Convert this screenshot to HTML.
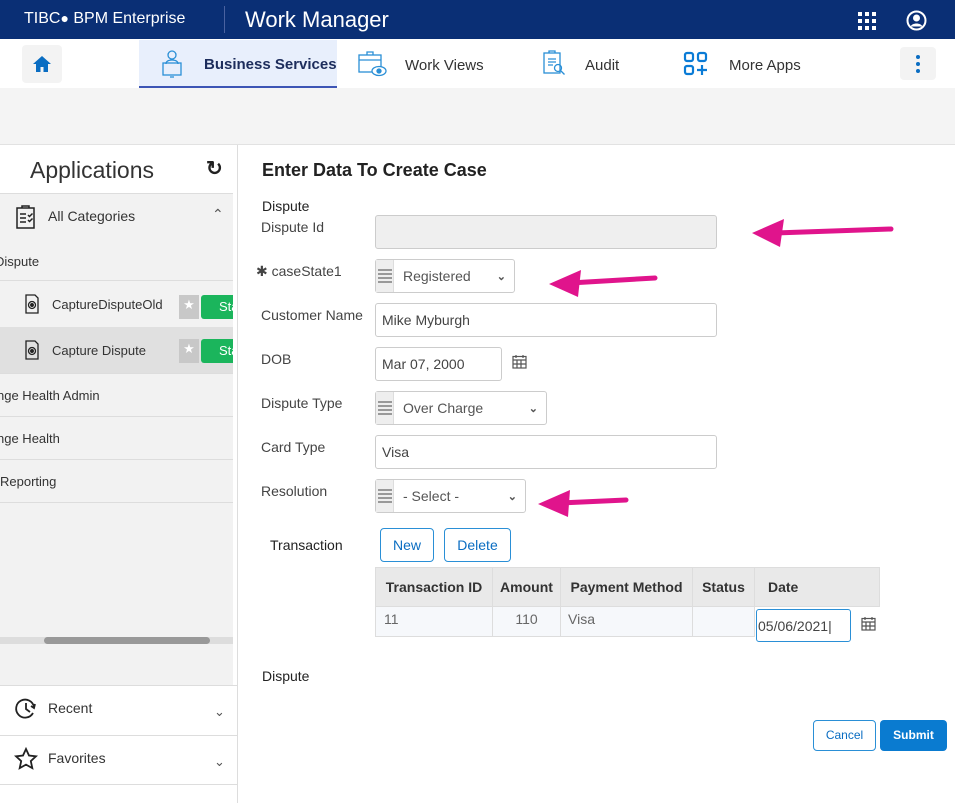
<!DOCTYPE html>
<html><head><style>
*{box-sizing:border-box;margin:0;padding:0}
body{width:955px;height:803px;overflow:hidden;background:#fff;font-family:"Liberation Sans",sans-serif;position:relative;color:#333}
.a{position:absolute}
.lbl{position:absolute;font-size:14px;color:#444}
.inp{position:absolute;border:1px solid #ccc;border-radius:3px;background:#fff;font-size:14px;color:#444;padding-left:6px;display:flex;align-items:center}
.sel{position:absolute;border:1px solid #ccc;border-radius:3px;background:#fff;font-size:14px;color:#555;display:flex;align-items:center}
.sel .h{width:18px;height:100%;background:#eee;border-right:1px solid #ddd;display:flex;flex-direction:column;justify-content:center;align-items:center;gap:2px}
.sel .h i{display:block;width:14px;height:2px;background:#999}
.sel span{flex:1;padding-left:9px}
.row{position:absolute;left:0;width:233px;font-size:13px;color:#333;border-bottom:1px solid #ddd;display:flex;align-items:center}
th,td{border:1px solid #ddd;font-size:14px;height:30px}
th{background:#e9e9e9;color:#333;font-weight:bold}
td{color:#666;background:#f6f8fb}
</style></head><body>
<div class="a" style="left:0;top:0;width:955px;height:39px;background:#0a2f75"></div>
<div class="a" style="left:24px;top:10px;color:#fff;font-size:16px">TIBC<span style="font-size:14px">●</span> BPM Enterprise</div>
<div class="a" style="left:224px;top:6px;width:1px;height:27px;background:#4a62a0"></div>
<div class="a" style="left:245px;top:7px;color:#fff;font-size:22px">Work Manager</div>
<svg class="a" style="left:857px;top:11px" width="20" height="20"><g fill="#fff"><rect x="1" y="1" width="4" height="4"/><rect x="8" y="1" width="4" height="4"/><rect x="15" y="1" width="4" height="4"/><rect x="1" y="8" width="4" height="4"/><rect x="8" y="8" width="4" height="4"/><rect x="15" y="8" width="4" height="4"/><rect x="1" y="15" width="4" height="4"/><rect x="8" y="15" width="4" height="4"/><rect x="15" y="15" width="4" height="4"/></g></svg>
<svg class="a" style="left:906px;top:10px" width="21" height="21"><circle cx="10.5" cy="10.5" r="9" fill="none" stroke="#fff" stroke-width="2"/><circle cx="10.5" cy="8" r="3.5" fill="#fff"/><path d="M4.5 16.5c2-4 10-4 12 0" fill="#fff"/></svg>
<div class="a" style="left:0;top:39px;width:955px;height:49px;background:#fff;box-shadow:0 2px 3px rgba(0,0,0,.15)"></div>
<div class="a" style="left:22px;top:45px;width:40px;height:38px;background:#f3f3f3;border-radius:4px"></div>
<svg class="a" style="left:32px;top:55px" width="20" height="18"><path d="M10 1L1 9h3v8h4.5v-5h3v5H16V9h3z" fill="#0a6dc2"/></svg>
<div class="a" style="left:139px;top:40px;width:198px;height:48px;background:#e8effc;border-bottom:2px solid #3d55b5"></div>
<svg class="a" style="left:160px;top:50px" width="24" height="28" fill="none" stroke="#2a8fd6" stroke-width="1.3"><circle cx="12" cy="5" r="4"/><path d="M6 14c0-3 3-4 6-4s6 1 6 4"/><rect x="3" y="13" width="18" height="12"/><path d="M10 27h4"/></svg>
<div class="a" style="left:204px;top:56px;font-size:15px;font-weight:bold;color:#1d2d5c">Business Services</div>
<svg class="a" style="left:358px;top:50px" width="30" height="28" fill="none" stroke="#2a8fd6" stroke-width="1.3"><rect x="1" y="5" width="22" height="17"/><path d="M9 5V2h6v3M1 10h22"/><ellipse cx="21" cy="21" rx="7" ry="4.5" fill="#fff"/><circle cx="21" cy="21" r="2" fill="#2a8fd6"/></svg>
<div class="a" style="left:405px;top:57px;font-size:15px;color:#333">Work Views</div>
<svg class="a" style="left:543px;top:50px" width="24" height="26" fill="none" stroke="#2a8fd6" stroke-width="1.3"><rect x="1" y="3" width="16" height="20"/><path d="M6 3V1h6v2M5 9h8M5 12h8M5 15h5"/><circle cx="15" cy="18" r="3.5"/><path d="M17.5 20.5l4 4"/></svg>
<div class="a" style="left:585px;top:57px;font-size:15px;color:#333">Audit</div>
<svg class="a" style="left:683px;top:51px" width="26" height="25" fill="none" stroke="#0a7bd6" stroke-width="2.2"><rect x="2" y="2" width="8" height="8" rx="2"/><rect x="15" y="2" width="8" height="8" rx="2"/><rect x="2" y="15" width="8" height="8" rx="2"/><path d="M19 14v10M14 19h10"/></svg>
<div class="a" style="left:729px;top:57px;font-size:15px;color:#333">More Apps</div>
<div class="a" style="left:900px;top:47px;width:36px;height:33px;background:#f3f3f3;border-radius:4px"></div>
<svg class="a" style="left:914px;top:54px" width="8" height="20" fill="#0a6dc2"><circle cx="4" cy="3" r="2"/><circle cx="4" cy="10" r="2"/><circle cx="4" cy="17" r="2"/></svg>
<div class="a" style="left:0;top:88px;width:955px;height:57px;background:#f4f4f4;border-bottom:1px solid #e2e2e2"></div>
<!-- left panel -->
<div class="a" style="left:0;top:145px;width:238px;height:658px;background:#fff;border-right:1px solid #ddd"></div>
<div class="a" style="left:30px;top:157px;font-size:23px;color:#333">Applications</div>
<div class="a" style="left:206px;top:156px;font-size:20px;font-weight:bold;color:#222">↻</div>
<div class="a" style="left:0;top:193px;width:233px;height:492px;background:#f2f2f2;border-top:1px solid #ddd"></div>
<svg class="a" style="left:16px;top:205px" width="20" height="24" fill="none" stroke="#222" stroke-width="1.5"><rect x="1" y="3" width="17" height="20"/><path d="M6 3V1h7v2M4 9h6M4 13h6M4 17h6M12 10l1.5 1.5 3-3M12 15l1.5 1.5 3-3"/></svg>
<div class="a" style="left:48px;top:208px;font-size:14px;color:#333">All Categories</div>
<div class="a" style="left:212px;top:206px;font-size:14px;color:#555">⌃</div>
<div class="row" style="top:243px;height:38px"><span style="margin-left:-5px">Dispute</span></div>
<div class="row" style="top:281px;height:46px;border-bottom:none"><svg style="margin-left:25px" width="14" height="20" fill="none" stroke="#222" stroke-width="1.3"><path d="M1 1h9l3 3v15H1z"/><circle cx="7" cy="11" r="3.5"/><circle cx="7" cy="11" r="1.3" fill="#222"/></svg><span style="margin-left:13px">CaptureDisputeOld</span></div>
<div class="row" style="top:327px;height:46px;background:#e0e0e0;border-bottom:none"><svg style="margin-left:25px" width="14" height="20" fill="none" stroke="#222" stroke-width="1.3"><path d="M1 1h9l3 3v15H1z"/><circle cx="7" cy="11" r="3.5"/><circle cx="7" cy="11" r="1.3" fill="#222"/></svg><span style="margin-left:13px">Capture Dispute</span></div>
<div class="a" style="left:179px;top:295px;width:20px;height:24px;background:#c8c8c8;color:#fff;font-size:13px;text-align:center;line-height:20px">★</div>
<div class="a" style="left:201px;top:295px;width:32px;height:24px;background:#1bb55c;border-radius:3px 0 0 3px;color:#fff;font-size:13px;padding:4px 0 0 18px;overflow:hidden">Sta</div>
<div class="a" style="left:179px;top:339px;width:20px;height:24px;background:#c8c8c8;color:#fff;font-size:13px;text-align:center;line-height:20px">★</div>
<div class="a" style="left:201px;top:339px;width:32px;height:24px;background:#1bb55c;border-radius:3px 0 0 3px;color:#fff;font-size:13px;padding:4px 0 0 18px;overflow:hidden">Sta</div>
<div class="row" style="top:373px;height:44px;border-top:1px solid #ddd"><span style="margin-left:-3px">nge Health Admin</span></div>
<div class="row" style="top:417px;height:43px"><span style="margin-left:-3px">nge Health</span></div>
<div class="row" style="top:460px;height:43px"><span>Reporting</span></div>
<div class="a" style="left:0;top:637px;width:233px;height:7px;background:#ddd"></div>
<div class="a" style="left:44px;top:637px;width:166px;height:7px;background:#999;border-radius:4px"></div>
<div class="a" style="left:0;top:685px;width:238px;height:1px;background:#ddd"></div>
<svg class="a" style="left:14px;top:697px" width="24" height="24" fill="none" stroke="#222" stroke-width="1.8"><path d="M19 16a9 9 0 1 1 1-6"/><path d="M12 6v6l4 3"/><path d="M21 7l-1 4-3-2"/></svg>
<div class="a" style="left:48px;top:700px;font-size:14px;color:#333">Recent</div>
<div class="a" style="left:214px;top:704px;font-size:13px;color:#555">⌄</div>
<div class="a" style="left:0;top:735px;width:238px;height:1px;background:#ddd"></div>
<svg class="a" style="left:14px;top:747px" width="24" height="24"><path d="M12 2l3 6.5 7 .8-5.2 4.8 1.5 7L12 17.6 5.7 21.1l1.5-7L2 9.3l7-.8z" fill="none" stroke="#222" stroke-width="1.8"/></svg>
<div class="a" style="left:48px;top:750px;font-size:14px;color:#333">Favorites</div>
<div class="a" style="left:214px;top:754px;font-size:13px;color:#555">⌄</div>
<div class="a" style="left:0;top:784px;width:238px;height:1px;background:#ddd"></div>
<!-- form -->
<div class="a" style="left:262px;top:160px;font-size:18px;font-weight:bold;color:#222">Enter Data To Create Case</div>
<div class="lbl" style="left:262px;top:198px;color:#222">Dispute</div>
<div class="lbl" style="left:261px;top:219px">Dispute Id</div>
<div class="inp" style="left:375px;top:215px;width:342px;height:34px;background:#efefef"></div>
<div class="lbl" style="left:256px;top:263px">✱ caseState1</div>
<div class="sel" style="left:375px;top:259px;width:140px;height:34px"><div class="h"><i></i><i></i><i></i><i></i></div><span>Registered</span><b style="margin-right:8px;font-size:11px">⌄</b></div>
<div class="lbl" style="left:261px;top:307px">Customer Name</div>
<div class="inp" style="left:375px;top:303px;width:342px;height:34px">Mike Myburgh</div>
<div class="lbl" style="left:261px;top:351px">DOB</div>
<div class="inp" style="left:375px;top:347px;width:127px;height:34px">Mar 07, 2000</div>
<svg class="a" style="left:512px;top:354px" width="15" height="15" fill="none" stroke="#555" stroke-width="1.2"><rect x="1" y="2.5" width="13" height="11.5"/><path d="M1 6h13M4 1v3M11 1v3M5 6v8M9 6v8M1 10h13"/></svg>
<div class="lbl" style="left:261px;top:395px">Dispute Type</div>
<div class="sel" style="left:375px;top:391px;width:172px;height:34px"><div class="h"><i></i><i></i><i></i><i></i></div><span>Over Charge</span><b style="margin-right:8px;font-size:11px">⌄</b></div>
<div class="lbl" style="left:261px;top:439px">Card Type</div>
<div class="inp" style="left:375px;top:435px;width:342px;height:34px">Visa</div>
<div class="lbl" style="left:261px;top:483px">Resolution</div>
<div class="sel" style="left:375px;top:479px;width:151px;height:34px"><div class="h"><i></i><i></i><i></i><i></i></div><span>- Select -</span><b style="margin-right:8px;font-size:11px">⌄</b></div>
<div class="lbl" style="left:270px;top:537px;color:#222">Transaction</div>
<div class="a" style="left:380px;top:528px;width:54px;height:34px;border:1px solid #2a8fd6;border-radius:4px;color:#0a6dc2;font-size:14px;text-align:center;line-height:32px">New</div>
<div class="a" style="left:444px;top:528px;width:67px;height:34px;border:1px solid #2a8fd6;border-radius:4px;color:#0a6dc2;font-size:14px;text-align:center;line-height:32px">Delete</div>
<table class="a" style="left:375px;top:567px;border-collapse:collapse;width:505px">
<tr style="height:39px"><th style="width:117px;height:39px">Transaction ID</th><th style="width:68px">Amount</th><th style="width:132px">Payment Method</th><th style="width:62px">Status</th><th style="text-align:left;padding-left:13px">Date</th></tr>
<tr><td style="padding-left:8px;vertical-align:top;padding-top:4px">11</td><td style="text-align:center;vertical-align:top;padding-top:4px">110</td><td style="padding-left:7px;vertical-align:top;padding-top:4px">Visa</td><td></td><td style="background:#fff;border-bottom:none;border-right:none"></td></tr>
</table>
<div class="inp" style="left:756px;top:609px;width:95px;height:33px;border-color:#2a8fd6;padding-left:1px;color:#444">05/06/2021|</div>
<svg class="a" style="left:861px;top:616px" width="15" height="15" fill="none" stroke="#555" stroke-width="1.2"><rect x="1" y="2.5" width="13" height="11.5"/><path d="M1 6h13M4 1v3M11 1v3M5 6v8M9 6v8M1 10h13"/></svg>
<div class="lbl" style="left:262px;top:668px;color:#222">Dispute</div>
<div class="a" style="left:813px;top:720px;width:63px;height:31px;border:1px solid #2a8fd6;border-radius:4px;color:#0a6dc2;font-size:12px;text-align:center;line-height:29px">Cancel</div>
<div class="a" style="left:880px;top:720px;width:67px;height:31px;background:#0a7bd0;border-radius:4px;color:#fff;font-size:12px;font-weight:bold;text-align:center;line-height:31px">Submit</div>
<!-- arrows -->
<svg class="a" style="left:0;top:0" width="955" height="803"><g stroke="#e0148c" stroke-width="5" stroke-linecap="round" fill="#e0148c"><path d="M775 233L891 229"/><path d="M570 283L655 278"/><path d="M560 503L626 500"/></g>
<g fill="#e0148c"><path d="M752 233L784 219L780 247z"/><path d="M549 284L581 270L578 297z"/><path d="M538 504L570 490L568 517z"/></g></svg>
</body></html>
